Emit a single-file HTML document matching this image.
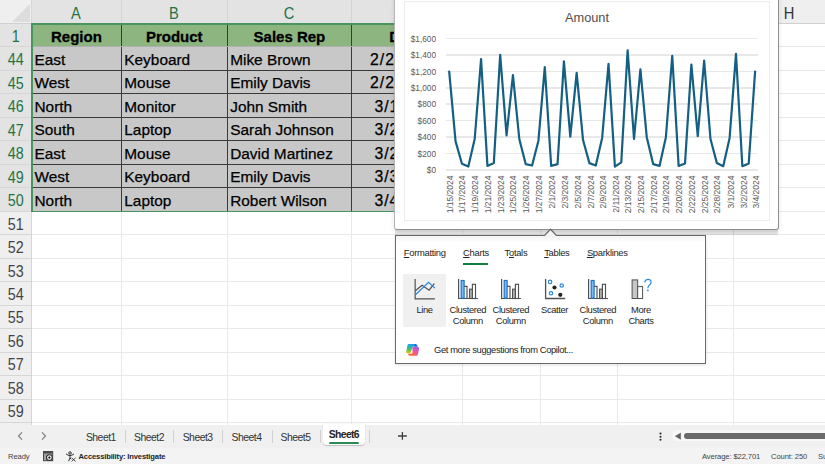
<!DOCTYPE html><html><head><meta charset="utf-8"><style>
*{margin:0;padding:0;box-sizing:border-box}
html,body{width:825px;height:464px;overflow:hidden;background:#fff;font-family:"Liberation Sans", sans-serif;}
.a{position:absolute}
.t{position:absolute;white-space:nowrap;line-height:1}
</style></head><body>

<div class="a" style="left:0;top:0;width:825px;height:23.5px;background:#efefef"></div>
<div class="a" style="left:31.5px;top:0;width:431.0px;height:23.5px;background:#e3e3e3"></div>
<svg class="a" style="left:0;top:0" width="32" height="24"><polygon points="30,4 30,22 12,22" fill="#dcdcdc"/></svg>
<div class="a" style="left:31.0px;top:0;width:1px;height:23.5px;background:#d4d4d4"></div>
<div class="a" style="left:120.8px;top:0;width:1px;height:23.5px;background:#d4d4d4"></div>
<div class="a" style="left:226.7px;top:0;width:1px;height:23.5px;background:#d4d4d4"></div>
<div class="a" style="left:351.1px;top:0;width:1px;height:23.5px;background:#d4d4d4"></div>
<div class="a" style="left:462.0px;top:0;width:1px;height:23.5px;background:#d4d4d4"></div>
<div class="a" style="left:539.7px;top:0;width:1px;height:23.5px;background:#d4d4d4"></div>
<div class="a" style="left:617.4px;top:0;width:1px;height:23.5px;background:#d4d4d4"></div>
<div class="a" style="left:732.8px;top:0;width:1px;height:23.5px;background:#d4d4d4"></div>
<div class="a" style="left:0;top:22.5px;width:825px;height:1px;background:#d0d0d0"></div>
<div class="t" style="left:56.400000000000006px;width:40px;text-align:center;top:4.6px;font-size:16.3px;transform:scaleX(0.9);color:#217346">A</div>
<div class="t" style="left:154.25px;width:40px;text-align:center;top:4.6px;font-size:16.3px;transform:scaleX(0.9);color:#217346">B</div>
<div class="t" style="left:269.4px;width:40px;text-align:center;top:4.6px;font-size:16.3px;transform:scaleX(0.9);color:#217346">C</div>
<div class="t" style="left:387.05px;width:40px;text-align:center;top:4.6px;font-size:16.3px;transform:scaleX(0.9);color:#217346">D</div>
<div class="t" style="left:481.35px;width:40px;text-align:center;top:4.6px;font-size:16.3px;transform:scaleX(0.9);color:#333">E</div>
<div class="t" style="left:559.05px;width:40px;text-align:center;top:4.6px;font-size:16.3px;transform:scaleX(0.9);color:#333">F</div>
<div class="t" style="left:655.5999999999999px;width:40px;text-align:center;top:4.6px;font-size:16.3px;transform:scaleX(0.9);color:#333">G</div>
<div class="t" style="left:769.15px;width:40px;text-align:center;top:4.6px;font-size:16.3px;transform:scaleX(0.9);color:#333">H</div>
<div class="a" style="left:0;top:23.5px;width:31.5px;height:401.5px;background:#efefef"></div>
<div class="a" style="left:0;top:23.5px;width:31.5px;height:187.76px;background:#e3e3e3"></div>
<div class="a" style="left:31.3px;top:0;width:1px;height:425px;background:#d6d6d6"></div>
<div class="a" style="left:0;top:46.47px;width:31.5px;height:1px;background:#d6d6d6"></div>
<div class="t" style="left:0;width:31.5px;text-align:center;top:27.8px;font-size:16.3px;transform:scaleX(0.88);color:#217346">1</div>
<div class="a" style="left:0;top:69.94px;width:31.5px;height:1px;background:#d6d6d6"></div>
<div class="t" style="left:0;width:31.5px;text-align:center;top:51.269999999999996px;font-size:16.3px;transform:scaleX(0.88);color:#217346">44</div>
<div class="a" style="left:0;top:93.41px;width:31.5px;height:1px;background:#d6d6d6"></div>
<div class="t" style="left:0;width:31.5px;text-align:center;top:74.74px;font-size:16.3px;transform:scaleX(0.88);color:#217346">45</div>
<div class="a" style="left:0;top:116.88px;width:31.5px;height:1px;background:#d6d6d6"></div>
<div class="t" style="left:0;width:31.5px;text-align:center;top:98.21px;font-size:16.3px;transform:scaleX(0.88);color:#217346">46</div>
<div class="a" style="left:0;top:140.35px;width:31.5px;height:1px;background:#d6d6d6"></div>
<div class="t" style="left:0;width:31.5px;text-align:center;top:121.67999999999999px;font-size:16.3px;transform:scaleX(0.88);color:#217346">47</div>
<div class="a" style="left:0;top:163.82px;width:31.5px;height:1px;background:#d6d6d6"></div>
<div class="t" style="left:0;width:31.5px;text-align:center;top:145.15px;font-size:16.3px;transform:scaleX(0.88);color:#217346">48</div>
<div class="a" style="left:0;top:187.29px;width:31.5px;height:1px;background:#d6d6d6"></div>
<div class="t" style="left:0;width:31.5px;text-align:center;top:168.62px;font-size:16.3px;transform:scaleX(0.88);color:#217346">49</div>
<div class="a" style="left:0;top:210.76px;width:31.5px;height:1px;background:#d6d6d6"></div>
<div class="t" style="left:0;width:31.5px;text-align:center;top:192.09px;font-size:16.3px;transform:scaleX(0.88);color:#217346">50</div>
<div class="a" style="left:0;top:234.23px;width:31.5px;height:1px;background:#d6d6d6"></div>
<div class="t" style="left:0;width:31.5px;text-align:center;top:215.56px;font-size:16.3px;transform:scaleX(0.88);color:#444">51</div>
<div class="a" style="left:0;top:257.7px;width:31.5px;height:1px;background:#d6d6d6"></div>
<div class="t" style="left:0;width:31.5px;text-align:center;top:239.03px;font-size:16.3px;transform:scaleX(0.88);color:#444">52</div>
<div class="a" style="left:0;top:281.16999999999996px;width:31.5px;height:1px;background:#d6d6d6"></div>
<div class="t" style="left:0;width:31.5px;text-align:center;top:262.5px;font-size:16.3px;transform:scaleX(0.88);color:#444">53</div>
<div class="a" style="left:0;top:304.64px;width:31.5px;height:1px;background:#d6d6d6"></div>
<div class="t" style="left:0;width:31.5px;text-align:center;top:285.96999999999997px;font-size:16.3px;transform:scaleX(0.88);color:#444">54</div>
<div class="a" style="left:0;top:328.11px;width:31.5px;height:1px;background:#d6d6d6"></div>
<div class="t" style="left:0;width:31.5px;text-align:center;top:309.44px;font-size:16.3px;transform:scaleX(0.88);color:#444">55</div>
<div class="a" style="left:0;top:351.58px;width:31.5px;height:1px;background:#d6d6d6"></div>
<div class="t" style="left:0;width:31.5px;text-align:center;top:332.91px;font-size:16.3px;transform:scaleX(0.88);color:#444">56</div>
<div class="a" style="left:0;top:375.04999999999995px;width:31.5px;height:1px;background:#d6d6d6"></div>
<div class="t" style="left:0;width:31.5px;text-align:center;top:356.38px;font-size:16.3px;transform:scaleX(0.88);color:#444">57</div>
<div class="a" style="left:0;top:398.52px;width:31.5px;height:1px;background:#d6d6d6"></div>
<div class="t" style="left:0;width:31.5px;text-align:center;top:379.84999999999997px;font-size:16.3px;transform:scaleX(0.88);color:#444">58</div>
<div class="a" style="left:0;top:421.99px;width:31.5px;height:1px;background:#d6d6d6"></div>
<div class="t" style="left:0;width:31.5px;text-align:center;top:403.32px;font-size:16.3px;transform:scaleX(0.88);color:#444">59</div>
<div class="a" style="left:31.5px;top:46.47px;width:793.5px;height:1px;background:#e9e9e9"></div>
<div class="a" style="left:31.5px;top:69.94px;width:793.5px;height:1px;background:#e9e9e9"></div>
<div class="a" style="left:31.5px;top:93.41px;width:793.5px;height:1px;background:#e9e9e9"></div>
<div class="a" style="left:31.5px;top:116.88px;width:793.5px;height:1px;background:#e9e9e9"></div>
<div class="a" style="left:31.5px;top:140.35px;width:793.5px;height:1px;background:#e9e9e9"></div>
<div class="a" style="left:31.5px;top:163.82px;width:793.5px;height:1px;background:#e9e9e9"></div>
<div class="a" style="left:31.5px;top:187.29px;width:793.5px;height:1px;background:#e9e9e9"></div>
<div class="a" style="left:31.5px;top:210.76px;width:793.5px;height:1px;background:#e9e9e9"></div>
<div class="a" style="left:31.5px;top:234.23px;width:793.5px;height:1px;background:#e9e9e9"></div>
<div class="a" style="left:31.5px;top:257.7px;width:793.5px;height:1px;background:#e9e9e9"></div>
<div class="a" style="left:31.5px;top:281.16999999999996px;width:793.5px;height:1px;background:#e9e9e9"></div>
<div class="a" style="left:31.5px;top:304.64px;width:793.5px;height:1px;background:#e9e9e9"></div>
<div class="a" style="left:31.5px;top:328.11px;width:793.5px;height:1px;background:#e9e9e9"></div>
<div class="a" style="left:31.5px;top:351.58px;width:793.5px;height:1px;background:#e9e9e9"></div>
<div class="a" style="left:31.5px;top:375.04999999999995px;width:793.5px;height:1px;background:#e9e9e9"></div>
<div class="a" style="left:31.5px;top:398.52px;width:793.5px;height:1px;background:#e9e9e9"></div>
<div class="a" style="left:31.5px;top:421.99px;width:793.5px;height:1px;background:#e9e9e9"></div>
<div class="a" style="left:120.8px;top:23.5px;width:1px;height:401.5px;background:#e9e9e9"></div>
<div class="a" style="left:226.7px;top:23.5px;width:1px;height:401.5px;background:#e9e9e9"></div>
<div class="a" style="left:351.1px;top:23.5px;width:1px;height:401.5px;background:#e9e9e9"></div>
<div class="a" style="left:462.0px;top:23.5px;width:1px;height:401.5px;background:#e9e9e9"></div>
<div class="a" style="left:539.7px;top:23.5px;width:1px;height:401.5px;background:#e9e9e9"></div>
<div class="a" style="left:617.4px;top:23.5px;width:1px;height:401.5px;background:#e9e9e9"></div>
<div class="a" style="left:732.8px;top:23.5px;width:1px;height:401.5px;background:#e9e9e9"></div>
<div class="a" style="left:31.5px;top:23.5px;width:431.0px;height:23.47px;background:#8db57f"></div>
<div class="a" style="left:31.5px;top:46.97px;width:431.0px;height:164.29px;background:#c8c8c8"></div>
<div class="a" style="left:120.8px;top:23.5px;width:1px;height:187.76px;background:#3a3a3a"></div>
<div class="a" style="left:226.7px;top:23.5px;width:1px;height:187.76px;background:#3a3a3a"></div>
<div class="a" style="left:351.1px;top:23.5px;width:1px;height:187.76px;background:#3a3a3a"></div>
<div class="a" style="left:31.5px;top:69.94px;width:431.0px;height:1px;background:#3a3a3a"></div>
<div class="a" style="left:31.5px;top:93.41px;width:431.0px;height:1px;background:#3a3a3a"></div>
<div class="a" style="left:31.5px;top:116.88px;width:431.0px;height:1px;background:#3a3a3a"></div>
<div class="a" style="left:31.5px;top:140.35px;width:431.0px;height:1px;background:#3a3a3a"></div>
<div class="a" style="left:31.5px;top:163.82px;width:431.0px;height:1px;background:#3a3a3a"></div>
<div class="a" style="left:31.5px;top:187.29px;width:431.0px;height:1px;background:#3a3a3a"></div>
<div class="a" style="left:31.5px;top:46.47px;width:431.0px;height:1px;background:#b0b0b0"></div>
<div class="a" style="left:31.5px;top:23.2px;width:431.0px;height:1.6px;background:#4a955f"></div>
<div class="a" style="left:31.5px;top:210.66px;width:431.0px;height:1.6px;background:#4a955f"></div>
<div class="a" style="left:31.2px;top:23.2px;width:1.6px;height:188.66px;background:#4a955f"></div>
<div class="t" style="left:16.400000000000006px;width:120px;text-align:center;top:28.5px;font-size:15px;font-weight:bold;color:#000;-webkit-text-stroke:0.3px #000">Region</div>
<div class="t" style="left:114.25px;width:120px;text-align:center;top:28.5px;font-size:15px;font-weight:bold;color:#000;-webkit-text-stroke:0.3px #000">Product</div>
<div class="t" style="left:229.39999999999998px;width:120px;text-align:center;top:28.5px;font-size:15px;font-weight:bold;color:#000;-webkit-text-stroke:0.3px #000">Sales Rep</div>
<div class="t" style="left:345.5px;width:120px;text-align:center;top:28.5px;font-size:15px;font-weight:bold;color:#000;-webkit-text-stroke:0.3px #000">Date</div>
<div class="t" style="left:34.5px;top:51.97px;font-size:15.4px;color:#000;-webkit-text-stroke:0.25px #000">East</div>
<div class="t" style="left:124.3px;top:51.97px;font-size:15.4px;color:#000;-webkit-text-stroke:0.25px #000">Keyboard</div>
<div class="t" style="left:230.2px;top:51.97px;font-size:15.4px;color:#000;-webkit-text-stroke:0.25px #000">Mike Brown</div>
<div class="t" style="left:370px;top:51.97px;font-size:15.8px;letter-spacing:1px;color:#000;-webkit-text-stroke:0.25px #000">2/24/2024</div>
<div class="t" style="left:34.5px;top:75.44px;font-size:15.4px;color:#000;-webkit-text-stroke:0.25px #000">West</div>
<div class="t" style="left:124.3px;top:75.44px;font-size:15.4px;color:#000;-webkit-text-stroke:0.25px #000">Mouse</div>
<div class="t" style="left:230.2px;top:75.44px;font-size:15.4px;color:#000;-webkit-text-stroke:0.25px #000">Emily Davis</div>
<div class="t" style="left:370px;top:75.44px;font-size:15.8px;letter-spacing:1px;color:#000;-webkit-text-stroke:0.25px #000">2/26/2024</div>
<div class="t" style="left:34.5px;top:98.91px;font-size:15.4px;color:#000;-webkit-text-stroke:0.25px #000">North</div>
<div class="t" style="left:124.3px;top:98.91px;font-size:15.4px;color:#000;-webkit-text-stroke:0.25px #000">Monitor</div>
<div class="t" style="left:230.2px;top:98.91px;font-size:15.4px;color:#000;-webkit-text-stroke:0.25px #000">John Smith</div>
<div class="t" style="left:374.4px;top:98.91px;font-size:15.8px;letter-spacing:1px;color:#000;-webkit-text-stroke:0.25px #000">3/1/2024</div>
<div class="t" style="left:34.5px;top:122.38px;font-size:15.4px;color:#000;-webkit-text-stroke:0.25px #000">South</div>
<div class="t" style="left:124.3px;top:122.38px;font-size:15.4px;color:#000;-webkit-text-stroke:0.25px #000">Laptop</div>
<div class="t" style="left:230.2px;top:122.38px;font-size:15.4px;color:#000;-webkit-text-stroke:0.25px #000">Sarah Johnson</div>
<div class="t" style="left:374.4px;top:122.38px;font-size:15.8px;letter-spacing:1px;color:#000;-webkit-text-stroke:0.25px #000">3/2/2024</div>
<div class="t" style="left:34.5px;top:145.85px;font-size:15.4px;color:#000;-webkit-text-stroke:0.25px #000">East</div>
<div class="t" style="left:124.3px;top:145.85px;font-size:15.4px;color:#000;-webkit-text-stroke:0.25px #000">Mouse</div>
<div class="t" style="left:230.2px;top:145.85px;font-size:15.4px;color:#000;-webkit-text-stroke:0.25px #000">David Martinez</div>
<div class="t" style="left:374.4px;top:145.85px;font-size:15.8px;letter-spacing:1px;color:#000;-webkit-text-stroke:0.25px #000">3/2/2024</div>
<div class="t" style="left:34.5px;top:169.32px;font-size:15.4px;color:#000;-webkit-text-stroke:0.25px #000">West</div>
<div class="t" style="left:124.3px;top:169.32px;font-size:15.4px;color:#000;-webkit-text-stroke:0.25px #000">Keyboard</div>
<div class="t" style="left:230.2px;top:169.32px;font-size:15.4px;color:#000;-webkit-text-stroke:0.25px #000">Emily Davis</div>
<div class="t" style="left:374.4px;top:169.32px;font-size:15.8px;letter-spacing:1px;color:#000;-webkit-text-stroke:0.25px #000">3/3/2024</div>
<div class="t" style="left:34.5px;top:192.79px;font-size:15.4px;color:#000;-webkit-text-stroke:0.25px #000">North</div>
<div class="t" style="left:124.3px;top:192.79px;font-size:15.4px;color:#000;-webkit-text-stroke:0.25px #000">Laptop</div>
<div class="t" style="left:230.2px;top:192.79px;font-size:15.4px;color:#000;-webkit-text-stroke:0.25px #000">Robert Wilson</div>
<div class="t" style="left:374.4px;top:192.79px;font-size:15.8px;letter-spacing:1px;color:#000;-webkit-text-stroke:0.25px #000">3/4/2024</div>
<div class="a" style="left:394.3px;top:-4px;width:384.3px;height:234px;background:#fff;border:1px solid #8f8f8f;border-left:1.3px solid #b4b4b4;border-radius:0 0 3px 3px;box-shadow:0 2px 5px rgba(0,0,0,0.1)"></div>
<div class="a" style="left:404px;top:1px;width:365.5px;height:220px;border:1px solid #ececec"></div>
<div class="t" style="left:487px;width:200px;text-align:center;top:12.2px;font-size:12.8px;color:#505050">Amount</div>
<div class="a" style="left:446px;top:37.85px;width:312.3px;height:1.5px;background:#e8e8e8"></div>
<div class="t" style="left:380px;width:56px;text-align:right;top:34.7px;font-size:9px;transform:scaleX(0.92);transform-origin:100% 50%;color:#595959">$1,600</div>
<div class="a" style="left:446px;top:54.25px;width:312.3px;height:1.5px;background:#e8e8e8"></div>
<div class="t" style="left:380px;width:56px;text-align:right;top:51.1px;font-size:9px;transform:scaleX(0.92);transform-origin:100% 50%;color:#595959">$1,400</div>
<div class="a" style="left:446px;top:70.65px;width:312.3px;height:1.5px;background:#e8e8e8"></div>
<div class="t" style="left:380px;width:56px;text-align:right;top:67.5px;font-size:9px;transform:scaleX(0.92);transform-origin:100% 50%;color:#595959">$1,200</div>
<div class="a" style="left:446px;top:87.05px;width:312.3px;height:1.5px;background:#e8e8e8"></div>
<div class="t" style="left:380px;width:56px;text-align:right;top:83.89999999999999px;font-size:9px;transform:scaleX(0.92);transform-origin:100% 50%;color:#595959">$1,000</div>
<div class="a" style="left:446px;top:103.44999999999999px;width:312.3px;height:1.5px;background:#e8e8e8"></div>
<div class="t" style="left:380px;width:56px;text-align:right;top:100.29999999999998px;font-size:9px;transform:scaleX(0.92);transform-origin:100% 50%;color:#595959">$800</div>
<div class="a" style="left:446px;top:119.85px;width:312.3px;height:1.5px;background:#e8e8e8"></div>
<div class="t" style="left:380px;width:56px;text-align:right;top:116.69999999999999px;font-size:9px;transform:scaleX(0.92);transform-origin:100% 50%;color:#595959">$600</div>
<div class="a" style="left:446px;top:136.25px;width:312.3px;height:1.5px;background:#e8e8e8"></div>
<div class="t" style="left:380px;width:56px;text-align:right;top:133.1px;font-size:9px;transform:scaleX(0.92);transform-origin:100% 50%;color:#595959">$400</div>
<div class="a" style="left:446px;top:152.64999999999998px;width:312.3px;height:1.5px;background:#e8e8e8"></div>
<div class="t" style="left:380px;width:56px;text-align:right;top:149.49999999999997px;font-size:9px;transform:scaleX(0.92);transform-origin:100% 50%;color:#595959">$200</div>
<div class="a" style="left:446px;top:169.04999999999998px;width:312.3px;height:1.5px;background:#e8e8e8"></div>
<div class="t" style="left:380px;width:56px;text-align:right;top:165.89999999999998px;font-size:9px;transform:scaleX(0.92);transform-origin:100% 50%;color:#595959">$0</div>
<svg class="a" style="left:0;top:0" width="825" height="240"><polyline points="449.20,71.70 455.57,141.40 461.95,163.80 468.32,166.60 474.69,139.00 481.06,59.00 487.44,165.90 493.81,163.10 500.18,54.80 506.56,135.50 512.93,75.20 519.30,139.00 525.68,164.10 532.05,165.50 538.42,140.70 544.79,67.20 551.17,165.90 557.54,164.10 563.91,61.40 570.29,136.60 576.66,72.80 583.03,140.00 589.41,163.10 595.78,165.50 602.15,137.90 608.52,63.80 614.90,166.60 621.27,162.40 627.64,50.30 634.02,139.00 640.39,69.30 646.76,137.20 653.14,164.10 659.51,165.90 665.88,137.20 672.25,55.90 678.63,165.90 685.00,163.40 691.37,64.50 697.75,136.20 704.12,60.70 710.49,139.00 716.87,163.10 723.24,166.20 729.61,137.90 735.99,53.80 742.36,166.20 748.73,163.40 755.10,71.70" fill="none" stroke="#156082" stroke-width="2.2" stroke-linejoin="round" stroke-linecap="round"/></svg>
<div class="t" style="left:450.5px;top:175.5px;width:0;height:0"><div style="position:absolute;right:0;top:-4.5px;transform-origin:100% 50%;transform:rotate(-90deg);font-size:8.5px;line-height:9px;color:#595959">1/15/2024</div></div>
<div class="t" style="left:463.246px;top:175.5px;width:0;height:0"><div style="position:absolute;right:0;top:-4.5px;transform-origin:100% 50%;transform:rotate(-90deg);font-size:8.5px;line-height:9px;color:#595959">1/17/2024</div></div>
<div class="t" style="left:475.992px;top:175.5px;width:0;height:0"><div style="position:absolute;right:0;top:-4.5px;transform-origin:100% 50%;transform:rotate(-90deg);font-size:8.5px;line-height:9px;color:#595959">1/19/2024</div></div>
<div class="t" style="left:488.738px;top:175.5px;width:0;height:0"><div style="position:absolute;right:0;top:-4.5px;transform-origin:100% 50%;transform:rotate(-90deg);font-size:8.5px;line-height:9px;color:#595959">1/21/2024</div></div>
<div class="t" style="left:501.484px;top:175.5px;width:0;height:0"><div style="position:absolute;right:0;top:-4.5px;transform-origin:100% 50%;transform:rotate(-90deg);font-size:8.5px;line-height:9px;color:#595959">1/23/2024</div></div>
<div class="t" style="left:514.23px;top:175.5px;width:0;height:0"><div style="position:absolute;right:0;top:-4.5px;transform-origin:100% 50%;transform:rotate(-90deg);font-size:8.5px;line-height:9px;color:#595959">1/25/2024</div></div>
<div class="t" style="left:526.976px;top:175.5px;width:0;height:0"><div style="position:absolute;right:0;top:-4.5px;transform-origin:100% 50%;transform:rotate(-90deg);font-size:8.5px;line-height:9px;color:#595959">1/26/2024</div></div>
<div class="t" style="left:539.722px;top:175.5px;width:0;height:0"><div style="position:absolute;right:0;top:-4.5px;transform-origin:100% 50%;transform:rotate(-90deg);font-size:8.5px;line-height:9px;color:#595959">1/27/2024</div></div>
<div class="t" style="left:552.468px;top:175.5px;width:0;height:0"><div style="position:absolute;right:0;top:-4.5px;transform-origin:100% 50%;transform:rotate(-90deg);font-size:8.5px;line-height:9px;color:#595959">2/1/2024</div></div>
<div class="t" style="left:565.2139999999999px;top:175.5px;width:0;height:0"><div style="position:absolute;right:0;top:-4.5px;transform-origin:100% 50%;transform:rotate(-90deg);font-size:8.5px;line-height:9px;color:#595959">2/3/2024</div></div>
<div class="t" style="left:577.96px;top:175.5px;width:0;height:0"><div style="position:absolute;right:0;top:-4.5px;transform-origin:100% 50%;transform:rotate(-90deg);font-size:8.5px;line-height:9px;color:#595959">2/5/2024</div></div>
<div class="t" style="left:590.706px;top:175.5px;width:0;height:0"><div style="position:absolute;right:0;top:-4.5px;transform-origin:100% 50%;transform:rotate(-90deg);font-size:8.5px;line-height:9px;color:#595959">2/7/2024</div></div>
<div class="t" style="left:603.452px;top:175.5px;width:0;height:0"><div style="position:absolute;right:0;top:-4.5px;transform-origin:100% 50%;transform:rotate(-90deg);font-size:8.5px;line-height:9px;color:#595959">2/9/2024</div></div>
<div class="t" style="left:616.198px;top:175.5px;width:0;height:0"><div style="position:absolute;right:0;top:-4.5px;transform-origin:100% 50%;transform:rotate(-90deg);font-size:8.5px;line-height:9px;color:#595959">2/11/2024</div></div>
<div class="t" style="left:628.944px;top:175.5px;width:0;height:0"><div style="position:absolute;right:0;top:-4.5px;transform-origin:100% 50%;transform:rotate(-90deg);font-size:8.5px;line-height:9px;color:#595959">2/13/2024</div></div>
<div class="t" style="left:641.69px;top:175.5px;width:0;height:0"><div style="position:absolute;right:0;top:-4.5px;transform-origin:100% 50%;transform:rotate(-90deg);font-size:8.5px;line-height:9px;color:#595959">2/15/2024</div></div>
<div class="t" style="left:654.436px;top:175.5px;width:0;height:0"><div style="position:absolute;right:0;top:-4.5px;transform-origin:100% 50%;transform:rotate(-90deg);font-size:8.5px;line-height:9px;color:#595959">2/17/2024</div></div>
<div class="t" style="left:667.182px;top:175.5px;width:0;height:0"><div style="position:absolute;right:0;top:-4.5px;transform-origin:100% 50%;transform:rotate(-90deg);font-size:8.5px;line-height:9px;color:#595959">2/19/2024</div></div>
<div class="t" style="left:679.928px;top:175.5px;width:0;height:0"><div style="position:absolute;right:0;top:-4.5px;transform-origin:100% 50%;transform:rotate(-90deg);font-size:8.5px;line-height:9px;color:#595959">2/20/2024</div></div>
<div class="t" style="left:692.674px;top:175.5px;width:0;height:0"><div style="position:absolute;right:0;top:-4.5px;transform-origin:100% 50%;transform:rotate(-90deg);font-size:8.5px;line-height:9px;color:#595959">2/22/2024</div></div>
<div class="t" style="left:705.4200000000001px;top:175.5px;width:0;height:0"><div style="position:absolute;right:0;top:-4.5px;transform-origin:100% 50%;transform:rotate(-90deg);font-size:8.5px;line-height:9px;color:#595959">2/25/2024</div></div>
<div class="t" style="left:718.1659999999999px;top:175.5px;width:0;height:0"><div style="position:absolute;right:0;top:-4.5px;transform-origin:100% 50%;transform:rotate(-90deg);font-size:8.5px;line-height:9px;color:#595959">2/28/2024</div></div>
<div class="t" style="left:730.912px;top:175.5px;width:0;height:0"><div style="position:absolute;right:0;top:-4.5px;transform-origin:100% 50%;transform:rotate(-90deg);font-size:8.5px;line-height:9px;color:#595959">3/1/2024</div></div>
<div class="t" style="left:743.658px;top:175.5px;width:0;height:0"><div style="position:absolute;right:0;top:-4.5px;transform-origin:100% 50%;transform:rotate(-90deg);font-size:8.5px;line-height:9px;color:#595959">3/2/2024</div></div>
<div class="t" style="left:756.404px;top:175.5px;width:0;height:0"><div style="position:absolute;right:0;top:-4.5px;transform-origin:100% 50%;transform:rotate(-90deg);font-size:8.5px;line-height:9px;color:#595959">3/4/2024</div></div>
<div class="a" style="left:395px;top:229.8px;width:383px;height:5.5px;background:linear-gradient(#00000022,#00000014)"></div>
<div class="a" style="left:394.5px;top:235px;width:311.20000000000005px;height:129.3px;background:linear-gradient(#f4f4f4,#fff 7px);border:1.3px solid #6a6a6a;box-shadow:0 1px 3px rgba(0,0,0,0.12)"></div>
<svg class="a" style="left:540px;top:227px" width="22" height="12"><polygon points="4.8,8.5 10.5,2.6 16.2,8.5 16.2,10 4.8,10" fill="#f3f3f3"/><path d="M4.4 8.6 L10.5 2.3 L16.6 8.6" fill="none" stroke="#6a6a6a" stroke-width="1.3" stroke-linejoin="round"/></svg>
<div class="t" style="left:403.8px;top:247.8px;font-size:9.4px;letter-spacing:-0.3px;color:#242424"><u>F</u>ormatting</div>
<div class="t" style="left:463.1px;top:247.8px;font-size:9.4px;letter-spacing:-0.3px;color:#242424"><u>C</u>harts</div>
<div class="t" style="left:504.6px;top:247.8px;font-size:9.4px;letter-spacing:-0.3px;color:#242424">T<u>o</u>tals</div>
<div class="t" style="left:544.2px;top:247.8px;font-size:9.4px;letter-spacing:-0.3px;color:#242424"><u>T</u>ables</div>
<div class="t" style="left:586.9px;top:247.8px;font-size:9.4px;letter-spacing:-0.3px;color:#242424"><u>S</u>parklines</div>
<div class="a" style="left:462.5px;top:263.3px;width:25.8px;height:2px;background:#107c41"></div>
<div class="a" style="left:403px;top:274px;width:43px;height:52.5px;background:#f0f0f0"></div>
<div class="t" style="left:394.5px;width:60px;text-align:center;top:304.5px;font-size:9.4px;letter-spacing:-0.4px;color:#242424">Line</div>
<div class="t" style="left:437.8px;width:60px;text-align:center;top:304.5px;font-size:9.4px;letter-spacing:-0.4px;color:#242424">Clustered</div>
<div class="t" style="left:437.8px;width:60px;text-align:center;top:316.0px;font-size:9.4px;letter-spacing:-0.4px;color:#242424">Column</div>
<div class="t" style="left:480.8px;width:60px;text-align:center;top:304.5px;font-size:9.4px;letter-spacing:-0.4px;color:#242424">Clustered</div>
<div class="t" style="left:480.8px;width:60px;text-align:center;top:316.0px;font-size:9.4px;letter-spacing:-0.4px;color:#242424">Column</div>
<div class="t" style="left:524.5px;width:60px;text-align:center;top:304.5px;font-size:9.4px;letter-spacing:-0.4px;color:#242424">Scatter</div>
<div class="t" style="left:567.8px;width:60px;text-align:center;top:304.5px;font-size:9.4px;letter-spacing:-0.4px;color:#242424">Clustered</div>
<div class="t" style="left:567.8px;width:60px;text-align:center;top:316.0px;font-size:9.4px;letter-spacing:-0.4px;color:#242424">Column</div>
<div class="t" style="left:611px;width:60px;text-align:center;top:304.5px;font-size:9.4px;letter-spacing:-0.4px;color:#242424">More</div>
<div class="t" style="left:611px;width:60px;text-align:center;top:316.0px;font-size:9.4px;letter-spacing:-0.4px;color:#242424">Charts</div>
<svg class="a" style="left:412.5px;top:277px" width="24" height="24" viewBox="0 0 24 24">
<path d="M2.15 2 V21.8 H21.9" fill="none" stroke="#505050" stroke-width="1.2"/>
<path d="M2.3 13.7 L9.1 8.2 L16.1 13.2 L21.3 6.7" fill="none" stroke="#505050" stroke-width="1.25"/>
<path d="M2.7 17.5 L15.6 5.4 L21.9 11.1" fill="none" stroke="#2b88d8" stroke-width="1.25"/></svg>
<svg class="a" style="left:455.8px;top:277px" width="24" height="24" viewBox="0 0 24 24">
<path d="M2.6 2 V21.5 H21.9" fill="none" stroke="#505050" stroke-width="1.2"/>
<rect x="5.2" y="3.5" width="2.9" height="17.6" fill="#7dbcf0" stroke="#1f74cc" stroke-width="1.2"/>
<path d="M8.1 9.3 H11 V21.5" fill="none" stroke="#505050" stroke-width="1.15"/>
<rect x="13.6" y="12.2" width="2.8" height="9.3" fill="#c2c0be" stroke="#505050" stroke-width="1.15"/>
<rect x="16.4" y="7.3" width="3.1" height="14.2" fill="#fff" stroke="#505050" stroke-width="1.15"/></svg>
<svg class="a" style="left:498.8px;top:277px" width="24" height="24" viewBox="0 0 24 24">
<path d="M2.6 2 V21.5 H21.9" fill="none" stroke="#505050" stroke-width="1.2"/>
<rect x="5.2" y="3.5" width="2.9" height="17.6" fill="#7dbcf0" stroke="#1f74cc" stroke-width="1.2"/>
<path d="M8.1 9.3 H11 V21.5" fill="none" stroke="#505050" stroke-width="1.15"/>
<rect x="13.6" y="12.2" width="2.8" height="9.3" fill="#c2c0be" stroke="#505050" stroke-width="1.15"/>
<rect x="16.4" y="7.3" width="3.1" height="14.2" fill="#fff" stroke="#505050" stroke-width="1.15"/></svg>
<svg class="a" style="left:542.5px;top:277px" width="24" height="24" viewBox="0 0 24 24">
<path d="M2.6 2 V21.5 H22.2" fill="none" stroke="#505050" stroke-width="1.3"/>
<circle cx="7.1" cy="4.9" r="1.7" fill="none" stroke="#2b88d8" stroke-width="1.2"/>
<circle cx="18.7" cy="8.5" r="1.7" fill="none" stroke="#2b88d8" stroke-width="1.2"/>
<circle cx="8" cy="16.3" r="1.7" fill="none" stroke="#2b88d8" stroke-width="1.2"/>
<circle cx="11.5" cy="10.5" r="2.1" fill="#242424"/>
<circle cx="17.3" cy="17.8" r="2.1" fill="#242424"/></svg>
<svg class="a" style="left:585.8px;top:277px" width="24" height="24" viewBox="0 0 24 24">
<path d="M2.6 2 V21.5 H21.9" fill="none" stroke="#505050" stroke-width="1.2"/>
<rect x="5.2" y="3.5" width="2.9" height="17.6" fill="#7dbcf0" stroke="#1f74cc" stroke-width="1.2"/>
<path d="M8.1 9.3 H11 V21.5" fill="none" stroke="#505050" stroke-width="1.15"/>
<rect x="13.6" y="12.2" width="2.8" height="9.3" fill="#c2c0be" stroke="#505050" stroke-width="1.15"/>
<rect x="16.4" y="7.3" width="3.1" height="14.2" fill="#fff" stroke="#505050" stroke-width="1.15"/></svg>
<svg class="a" style="left:629px;top:277px" width="24" height="24" viewBox="0 0 24 24">
<rect x="3.1" y="2.9" width="5.6" height="18.6" fill="#c8c6c4" stroke="#505050" stroke-width="1"/>
<rect x="8.7" y="9.6" width="4.9" height="11.9" fill="#fff" stroke="#505050" stroke-width="1"/>
<path d="M15.8 5.3 Q16.2 2.3 19.1 2.3 Q22.2 2.4 22.1 5.2 Q22 7 20.2 8.2 Q18.9 9.1 18.9 11.3" fill="none" stroke="#2b88d8" stroke-width="1.2"/>
<circle cx="18.9" cy="13.4" r="0.85" fill="#2b88d8"/></svg>
<svg class="a" style="left:405px;top:343px" width="15" height="14" viewBox="0 0 15 14">
<defs><linearGradient id="cg1" x1="0.3" y1="0" x2="0.1" y2="1"><stop offset="0" stop-color="#1aa0f0"/><stop offset="0.55" stop-color="#3dc46a"/><stop offset="1" stop-color="#f2c300"/></linearGradient>
<linearGradient id="cg2" x1="0.9" y1="0" x2="0.2" y2="1"><stop offset="0" stop-color="#a455f0"/><stop offset="0.5" stop-color="#f0589b"/><stop offset="1" stop-color="#ff6a1f"/></linearGradient></defs>
<path d="M3.6 1 H10 Q11.6 1 12.3 2.6 L12.6 3.5 H8.8 Q7.8 3.5 7.4 4.6 L5.4 10.2 H2.3 Q0.8 10.2 1.2 8.6 L2.4 2.5 Q2.7 1 3.6 1Z" fill="url(#cg1)"/>
<path d="M10 1 Q11.6 1 12.3 2.6 L12.6 3.5 H8.8 Z" fill="#1b5fd6"/>
<path d="M7.4 4 H12.8 Q14.4 4 14.1 5.6 L12.9 11.4 Q12.6 12.8 11.4 12.8 H5 Q3.5 12.8 3.2 11.4 L3 10.8 H6.6 Q7.2 10.8 7.5 10 Z" fill="url(#cg2)"/></svg>
<div class="t" style="left:434px;top:345px;font-size:9.4px;letter-spacing:-0.38px;color:#242424">Get more suggestions from Copilot...</div>
<div class="a" style="left:0;top:425px;width:825px;height:22.5px;background:#f0f0f0"></div>
<svg class="a" style="left:0;top:425px" width="60" height="22"><path d="M22 7.4 L18.5 11 L22 14.6" fill="none" stroke="#7a7a7a" stroke-width="1.1"/><path d="M42 7.4 L45.5 11 L42 14.6" fill="none" stroke="#7a7a7a" stroke-width="1.1"/></svg>
<div class="t" style="left:85.9px;top:432.8px;font-size:10.4px;letter-spacing:-0.5px;color:#333">Sheet1</div>
<div class="t" style="left:134px;top:432.8px;font-size:10.4px;letter-spacing:-0.5px;color:#333">Sheet2</div>
<div class="t" style="left:182.7px;top:432.8px;font-size:10.4px;letter-spacing:-0.5px;color:#333">Sheet3</div>
<div class="t" style="left:231.5px;top:432.8px;font-size:10.4px;letter-spacing:-0.5px;color:#333">Sheet4</div>
<div class="t" style="left:280.5px;top:432.8px;font-size:10.4px;letter-spacing:-0.5px;color:#333">Sheet5</div>
<div class="a" style="left:124.8px;top:430px;width:1px;height:13px;background:#d0d0d0"></div>
<div class="a" style="left:173.3px;top:430px;width:1px;height:13px;background:#d0d0d0"></div>
<div class="a" style="left:222px;top:430px;width:1px;height:13px;background:#d0d0d0"></div>
<div class="a" style="left:271.5px;top:430px;width:1px;height:13px;background:#d0d0d0"></div>
<div class="a" style="left:320px;top:430px;width:1px;height:13px;background:#d0d0d0"></div>
<div class="a" style="left:368.5px;top:430px;width:1px;height:13px;background:#d0d0d0"></div>
<div class="a" style="left:322.9px;top:423.5px;width:42px;height:21.4px;background:#fff;border-radius:0 0 4px 4px;box-shadow:0 0.5px 1px rgba(0,0,0,0.2)"></div>
<div class="t" style="left:328.8px;top:430.3px;font-size:10.4px;font-weight:bold;letter-spacing:-0.65px;color:#242424">Sheet6</div>
<div class="a" style="left:328.5px;top:442px;width:30.7px;height:1.6px;background:#2a8c55;border-radius:1px"></div>
<svg class="a" style="left:395px;top:429px" width="15" height="15"><path d="M3 7 H11.8 M7.4 3.1 V10.7" stroke="#3f3f3f" stroke-width="1.3"/></svg>
<svg class="a" style="left:655px;top:430px" width="11" height="13"><circle cx="5.5" cy="3.5" r="1.05" fill="#2a2a2a"/><circle cx="5.5" cy="6.7" r="1.05" fill="#2a2a2a"/><circle cx="5.5" cy="9.8" r="1.05" fill="#2a2a2a"/></svg>
<div class="a" style="left:672.3px;top:430.2px;width:160px;height:11.3px;background:#f7f7f7;border-radius:5.6px"></div>
<svg class="a" style="left:675px;top:432px" width="8" height="9"><polygon points="0.3,4.2 5.6,1.1 5.6,7.3" fill="#616161" stroke="#616161" stroke-width="0.5" stroke-linejoin="round"/></svg>
<div class="a" style="left:683.9px;top:432.7px;width:160px;height:6.6px;background:#6b6b6b;border-radius:3.3px"></div>
<div class="a" style="left:0;top:447.5px;width:825px;height:17px;background:#f3f3f3"></div>
<div class="t" style="left:8px;top:452.5px;font-size:7.6px;letter-spacing:-0.1px;color:#424242">Ready</div>
<svg class="a" style="left:43px;top:451px" width="11" height="11" viewBox="0 0 11 11"><rect x="0.5" y="0.5" width="9.2" height="9.2" fill="#a0a0a0" stroke="#4a4a4a" stroke-width="1"/><rect x="0.5" y="0.5" width="9.2" height="2" fill="#4a4a4a"/><circle cx="6.4" cy="6.6" r="2.9" fill="#f3f3f3" stroke="#2e2e2e" stroke-width="1.1"/><circle cx="6.4" cy="6.6" r="1.15" fill="#111"/></svg>
<svg class="a" style="left:65px;top:450.5px" width="12" height="11" viewBox="0 0 12 11"><circle cx="5" cy="2" r="1.25" fill="none" stroke="#333" stroke-width="1"/><path d="M1 2.9 Q5 6.2 9 2.9 M5 4.8 V6.8 L3.6 10.2 M5 6.8 L6.1 8.4" fill="none" stroke="#333" stroke-width="1"/><path d="M6.6 6.8 L10.6 10.4 M10.6 6.8 L6.6 10.4" stroke="#333" stroke-width="0.9"/></svg>
<div class="t" style="left:78.5px;top:452.5px;font-size:7.6px;font-weight:bold;letter-spacing:-0.15px;color:#242424">Accessibility: Investigate</div>
<div class="t" style="left:702px;top:452.5px;font-size:7.6px;letter-spacing:-0.1px;color:#424242">Average: $22,701</div>
<div class="t" style="left:771px;top:452.5px;font-size:7.6px;letter-spacing:-0.1px;color:#424242">Count: 250</div>
<div class="t" style="left:818px;top:452.5px;font-size:7.6px;letter-spacing:-0.1px;color:#424242">Sum</div>
</body></html>
